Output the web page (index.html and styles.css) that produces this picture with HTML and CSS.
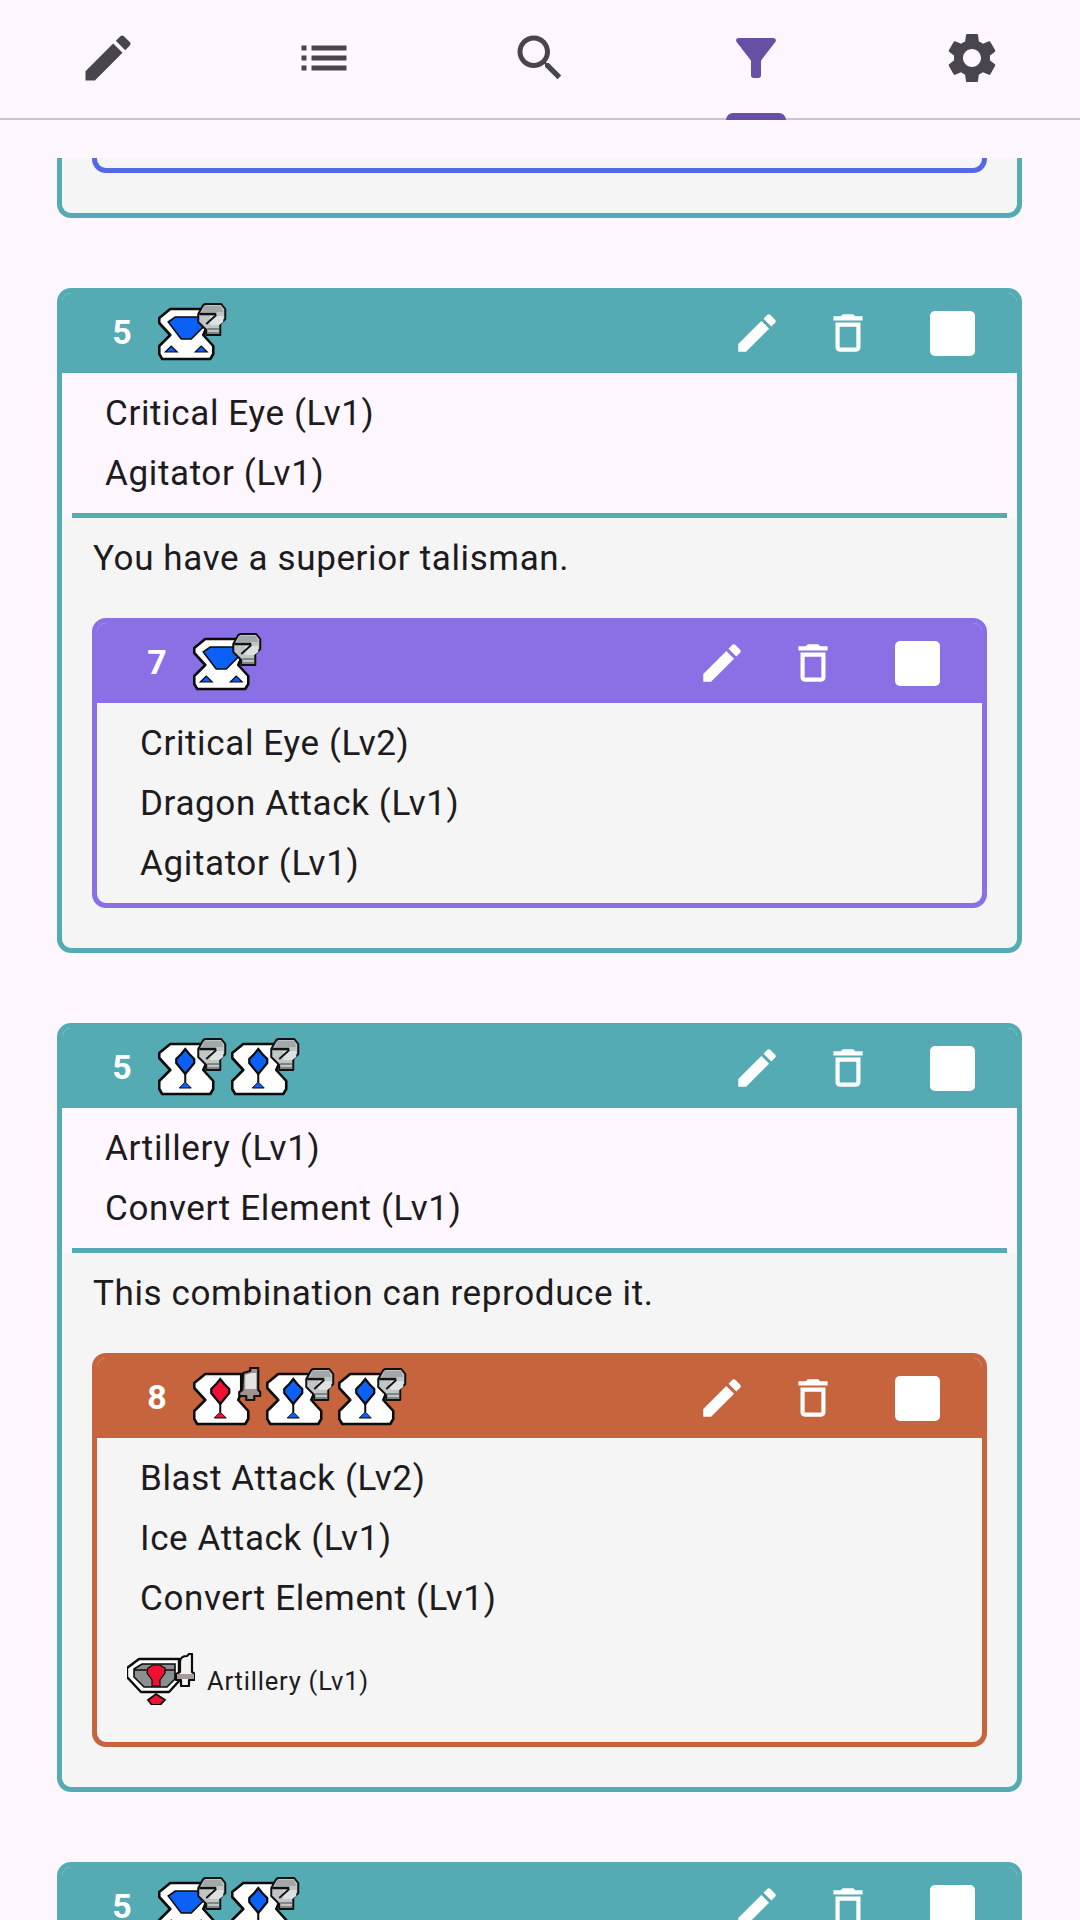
FILE: index.html
```html
<!DOCTYPE html>
<html lang="en">
<head>
<meta charset="utf-8">
<title>Talismans</title>
<link rel="stylesheet" href="styles.css">
</head>
<body>
<svg class="defs" aria-hidden="true">
  <defs>
    <symbol id="i-edit" viewBox="0 0 24 24"><path d="M3 17.25V21h3.75L17.81 9.94l-3.75-3.75L3 17.25zM20.71 7.04c.39-.39.39-1.02 0-1.41l-2.34-2.34c-.39-.39-1.02-.39-1.41 0l-1.83 1.83 3.75 3.75 1.83-1.83z"/></symbol>
    <symbol id="i-list" viewBox="0 0 24 24"><path d="M3 13h2v-2H3v2zm0 4h2v-2H3v2zm0-8h2V7H3v2zm4 4h14v-2H7v2zm0 4h14v-2H7v2zM7 7v2h14V7H7z"/></symbol>
    <symbol id="i-search" viewBox="0 0 24 24"><path d="M15.5 14h-.79l-.28-.27C15.41 12.59 16 11.11 16 9.5 16 5.91 13.09 3 9.5 3S3 5.91 3 9.5 5.91 16 9.5 16c1.61 0 3.09-.59 4.23-1.57l.27.28v.79l5 4.99L20.49 19l-4.99-5zm-6 0C7.01 14 5 11.99 5 9.5S7.01 5 9.5 5 14 7.01 14 9.5 11.99 14 9.5 14z"/></symbol>
    <symbol id="i-filter" viewBox="0 0 24 24"><path d="M4.25 5.61C6.27 8.2 10 13 10 13v6c0 .55.45 1 1 1h2c.55 0 1-.45 1-1v-6s3.72-4.8 5.74-7.39c.51-.66.04-1.61-.79-1.61H5.04c-.83 0-1.3.95-.79 1.61z"/></symbol>
    <symbol id="i-settings" viewBox="0 0 24 24"><path d="M19.14 12.94c.04-.3.06-.61.06-.94 0-.32-.02-.64-.07-.94l2.03-1.58c.18-.14.23-.41.12-.61l-1.92-3.32c-.12-.22-.37-.29-.59-.22l-2.39.96c-.5-.38-1.03-.7-1.62-.94l-.36-2.54c-.04-.24-.24-.41-.48-.41h-3.84c-.24 0-.43.17-.47.41l-.36 2.54c-.59.24-1.13.57-1.62.94l-2.39-.96c-.22-.08-.47 0-.59.22L2.74 8.87c-.12.21-.08.47.12.61l2.03 1.58c-.05.3-.09.63-.09.94s.02.64.07.94l-2.03 1.58c-.18.14-.23.41-.12.61l1.92 3.32c.12.22.37.29.59.22l2.39-.96c.5.38 1.03.7 1.62.94l.36 2.54c.05.24.24.41.48.41h3.84c.24 0 .44-.17.47-.41l.36-2.54c.59-.24 1.13-.56 1.62-.94l2.39.96c.22.08.47 0 .59-.22l1.92-3.32c.12-.22.07-.47-.12-.61l-2.01-1.58zM12 15.6c-1.98 0-3.6-1.62-3.6-3.6s1.62-3.6 3.6-3.6 3.6 1.62 3.6 3.6-1.62 3.6-3.6 3.6z"/></symbol>
    <symbol id="i-trash" viewBox="0 0 24 24"><path d="M6 19c0 1.1.9 2 2 2h8c1.1 0 2-.9 2-2V7H6v12zM8 9h8v10H8V9zm7.5-5l-1-1h-5l-1 1H5v2h14V4h-3.5z"/></symbol>

    <symbol id="t-body" viewBox="0 0 72 60"><path d="M12 7H48V26L45 33 55 44V52L52 57H4L1 52V44L12 33 1 21V16Z" fill="#fff" stroke="#0b0b0b" stroke-width="2.6" stroke-linejoin="round"/></symbol>
    <symbol id="t-wide" viewBox="0 0 72 60"><path d="M10 20 17 15H40L47 23 33 37H23Z" fill="#0b60f5" stroke="#0b0b0b" stroke-width="1.6"/><path d="M7 50 13 44 19 50ZM37 50 43 44 49 50Z" fill="#0b60f5" stroke="#0b0b0b" stroke-width="1.2"/></symbol>
    <symbol id="t-narrow" viewBox="0 0 72 60"><path d="M27 12 31 17 36 22V26L27 37 18 26V22L23 17Z" fill="#0b60f5" stroke="#0b0b0b" stroke-width="2.2"/><path d="M27 37V45" stroke="#0b0b0b" stroke-width="2"/><path d="M21 51 27 45 33 51Z" fill="#0b60f5" stroke="#0b0b0b" stroke-width="1"/></symbol>
    <symbol id="t-narrow-red" viewBox="0 0 72 60"><path d="M27 12 31 17 36 22V26L27 37 18 26V22L23 17Z" fill="#ee1133" stroke="#0b0b0b" stroke-width="2.2"/><path d="M27 37V45" stroke="#0b0b0b" stroke-width="2"/><path d="M21 51 27 45 33 51Z" fill="#ee1133" stroke="#0b0b0b" stroke-width="1"/></symbol>
    <symbol id="t-helmet" viewBox="0 0 72 60"><path d="M47 2H63L67 7V17L62 22V33H48V28L40 20V12L45 3Z" fill="#c0c6c6" stroke="#111" stroke-width="2" stroke-linejoin="round"/><path d="M46 4H63L65 10H44Z" fill="#a2a8a8"/><path d="M52 14H65V20L61 23H52Z" fill="#dde1e1"/><path d="M41 12H58" stroke="#111" stroke-width="2.4"/><path d="M48 22 58 13" stroke="#111" stroke-width="1.8"/><path d="M49 27H61M49 31H61" stroke="#6a6f6f" stroke-width="1.4"/></symbol>
    <symbol id="t-bell" viewBox="0 0 72 60"><path d="M50 6 57 4V1H65V23L67 25V29H61V33H53V29H46V25L49 23Z" fill="#a0928f" stroke="#111" stroke-width="2.2" stroke-linejoin="round"/><path d="M52 8 58 6H63V22H52Z" fill="#e6e2e2"/></symbol>

    <symbol id="t-artifact" viewBox="0 0 68 52"><path d="M0 15 12 6H52V28L42 39H14L0 24Z" fill="#fff" stroke="#0b0b0b" stroke-width="2.4" stroke-linejoin="round"/><path d="M7 16 15 11H48V26L40 34H17L7 24Z" fill="#8b8f8f" stroke="#0b0b0b" stroke-width="1.6"/><path d="M7 17H48" stroke="#0b0b0b" stroke-width="1.6"/><path d="M21 15 26 12H33L38 15V20L33 27V33H25V27L20 20Z" fill="#ee1133" stroke="#0b0b0b" stroke-width="1.2"/><path d="M21 47 29 41 38 47 33 52H25Z" fill="#ee1133" stroke="#0b0b0b" stroke-width="1.8"/><path d="M53 8Q54 3 60 3L62 1H65V19L68 21V27H62V33H54V27H49V21L53 19Z" fill="#f4f1f1" stroke="#0b0b0b" stroke-width="2.2" stroke-linejoin="round"/><path d="M50 21H67V26H50Z" fill="#a99a9a"/></symbol>
  </defs>
</svg>

<nav class="tabs">
  <div class="tab"><svg class="nav-icon"><use href="#i-edit"/></svg></div>
  <div class="tab"><svg class="nav-icon"><use href="#i-list"/></svg></div>
  <div class="tab"><svg class="nav-icon"><use href="#i-search"/></svg></div>
  <div class="tab tab-active"><svg class="nav-icon"><use href="#i-filter"/></svg><span class="tab-mark"></span></div>
  <div class="tab"><svg class="nav-icon"><use href="#i-settings"/></svg></div>
</nav>

<main class="list">
  <div class="tail">
    <div class="tail-inner"></div>
  </div>

  <section class="card card-teal">
    <header class="head">
      <span class="num">5</span>
      <div class="slots">
        <svg class="tal"><use href="#t-body"/><use href="#t-wide"/><use href="#t-helmet"/></svg>
      </div>
      <div class="actions">
        <svg class="act act-edit"><use href="#i-edit"/></svg>
        <svg class="act act-trash"><use href="#i-trash"/></svg>
        <span class="check"></span>
      </div>
    </header>
    <div class="skills skills-light">
      <p class="skill">Critical Eye (Lv1)</p>
      <p class="skill">Agitator (Lv1)</p>
    </div>
    <div class="rule-wrap"><div class="rule"></div></div>
    <div class="detail">
      <p class="note">You have a superior talisman.</p>
      <section class="card card-purple">
        <header class="head">
          <span class="num">7</span>
          <div class="slots">
            <svg class="tal"><use href="#t-body"/><use href="#t-wide"/><use href="#t-helmet"/></svg>
          </div>
          <div class="actions">
            <svg class="act act-edit"><use href="#i-edit"/></svg>
            <svg class="act act-trash"><use href="#i-trash"/></svg>
            <span class="check"></span>
          </div>
        </header>
        <div class="skills">
          <p class="skill">Critical Eye (Lv2)</p>
          <p class="skill">Dragon Attack (Lv1)</p>
          <p class="skill">Agitator (Lv1)</p>
        </div>
      </section>
    </div>
  </section>

  <section class="card card-teal">
    <header class="head">
      <span class="num">5</span>
      <div class="slots">
        <svg class="tal"><use href="#t-body"/><use href="#t-narrow"/><use href="#t-helmet"/></svg>
        <svg class="tal"><use href="#t-body"/><use href="#t-narrow"/><use href="#t-helmet"/></svg>
      </div>
      <div class="actions">
        <svg class="act act-edit"><use href="#i-edit"/></svg>
        <svg class="act act-trash"><use href="#i-trash"/></svg>
        <span class="check"></span>
      </div>
    </header>
    <div class="skills skills-light">
      <p class="skill">Artillery (Lv1)</p>
      <p class="skill">Convert Element (Lv1)</p>
    </div>
    <div class="rule-wrap"><div class="rule"></div></div>
    <div class="detail">
      <p class="note">This combination can reproduce it.</p>
      <section class="card card-orange">
        <header class="head">
          <span class="num">8</span>
          <div class="slots">
            <svg class="tal"><use href="#t-body"/><use href="#t-narrow-red"/><use href="#t-bell"/></svg>
            <svg class="tal"><use href="#t-body"/><use href="#t-narrow"/><use href="#t-helmet"/></svg>
            <svg class="tal"><use href="#t-body"/><use href="#t-narrow"/><use href="#t-helmet"/></svg>
          </div>
          <div class="actions">
            <svg class="act act-edit"><use href="#i-edit"/></svg>
            <svg class="act act-trash"><use href="#i-trash"/></svg>
            <span class="check"></span>
          </div>
        </header>
        <div class="skills">
          <p class="skill">Blast Attack (Lv2)</p>
          <p class="skill">Ice Attack (Lv1)</p>
          <p class="skill">Convert Element (Lv1)</p>
        </div>
        <div class="deco">
          <svg class="deco-icon"><use href="#t-artifact"/></svg>
          <span class="deco-text">Artillery (Lv1)</span>
        </div>
      </section>
    </div>
  </section>

  <section class="card card-teal">
    <header class="head">
      <span class="num">5</span>
      <div class="slots">
        <svg class="tal"><use href="#t-body"/><use href="#t-wide"/><use href="#t-helmet"/></svg>
        <svg class="tal"><use href="#t-body"/><use href="#t-narrow"/><use href="#t-helmet"/></svg>
      </div>
      <div class="actions">
        <svg class="act act-edit"><use href="#i-edit"/></svg>
        <svg class="act act-trash"><use href="#i-trash"/></svg>
        <span class="check"></span>
      </div>
    </header>
  </section>
</main>
</body>
</html>
```

FILE: styles.css
```css
* { box-sizing: border-box; }

html, body {
  margin: 0;
  height: 1920px;
  overflow: hidden;
  background: #fef7ff;
  font-family: Roboto, "Liberation Sans", sans-serif;
  color: #1d1b20;
}

.defs { width: 0; height: 0; display: block; }

.tabs {
  display: grid;
  grid-template-columns: repeat(5, 216px);
  height: 120px;
  border-bottom: 2px solid #cac4d0;
}

.tab {
  position: relative;
  display: flex;
  justify-content: center;
  padding-top: 28px;
  color: #49454f;
  fill: currentColor;
}

.tab-active { color: #6750a4; }

.nav-icon { width: 60px; height: 60px; }

.tab-mark {
  position: absolute;
  left: 78px;
  bottom: -2px;
  width: 60px;
  height: 7px;
  background: #6750a4;
  border-radius: 8px 8px 0 0;
}

.list {
  display: flex;
  flex-direction: column;
  gap: 70px;
  margin-top: 38px;
  padding: 0 58px 0 57px;
  height: 1762px;
  overflow: hidden;
}

.tail {
  flex: none;
  height: 60px;
  padding: 0 30px;
  background: #f5f5f5;
  border: 5px solid #54abb3;
  border-top: 0;
  border-radius: 0 0 14px 14px;
}

.tail-inner {
  height: 15px;
  border: 5px solid #5669e5;
  border-top: 0;
  border-radius: 0 0 14px 14px;
}

.card {
  flex: none;
  background: #f5f5f5;
  border: 5px solid;
  border-radius: 14px;
  overflow: hidden;
}

.card-teal { border-color: #54abb3; }
.card-teal > .head { background: #54abb3; }
.card-purple { border-color: #8b6fe5; }
.card-purple > .head { background: #8b6fe5; }
.card-orange { border-color: #c6653d; }
.card-orange > .head { background: #c6653d; }

.head {
  display: flex;
  align-items: center;
  height: 80px;
  padding: 0 42px 0 40px;
  color: #fff;
  fill: #fff;
}

.num {
  width: 40px;
  text-align: center;
  font-size: 34px;
  font-weight: 700;
  line-height: 28px;
  margin-top: -2px;
}

.slots {
  display: flex;
  margin-left: 16px;
  margin-top: -2px;
}

.tal {
  display: block;
  width: 72.5px;
  height: 60px;
  overflow: visible;
}

.actions {
  display: flex;
  align-items: center;
  margin-left: auto;
}

.act { width: 50px; height: 50px; display: block; }
.act-trash { margin-left: 41px; }

.check {
  display: block;
  width: 45px;
  height: 45px;
  margin-left: 57px;
  background: #fff;
  border-radius: 5px;
}

.skills {
  padding: 10px 0 10px 43px;
}

.skills-light { background: #fef7ff; }

.skill {
  margin: 0;
  height: 60px;
  font-size: 35px;
  line-height: 62px;
  letter-spacing: 0.63px;
}

.rule-wrap {
  background: #fef7ff;
  padding: 0 10px;
}

.rule {
  height: 5px;
  background: #54abb3;
}

.detail {
  padding: 20px 30px 40px;
}

.note {
  margin: 0 0 38px;
  padding-left: 1px;
  font-size: 35px;
  line-height: 42px;
  letter-spacing: 0.63px;
}

.deco {
  display: flex;
  align-items: center;
  height: 52px;
  margin: 15px 0 37px 30px;
}

.deco-icon {
  display: block;
  width: 68px;
  height: 52px;
  overflow: visible;
}

.deco-text {
  margin: 4px 0 0 12px;
  font-size: 25.5px;
  letter-spacing: 0.8px;
}
```
